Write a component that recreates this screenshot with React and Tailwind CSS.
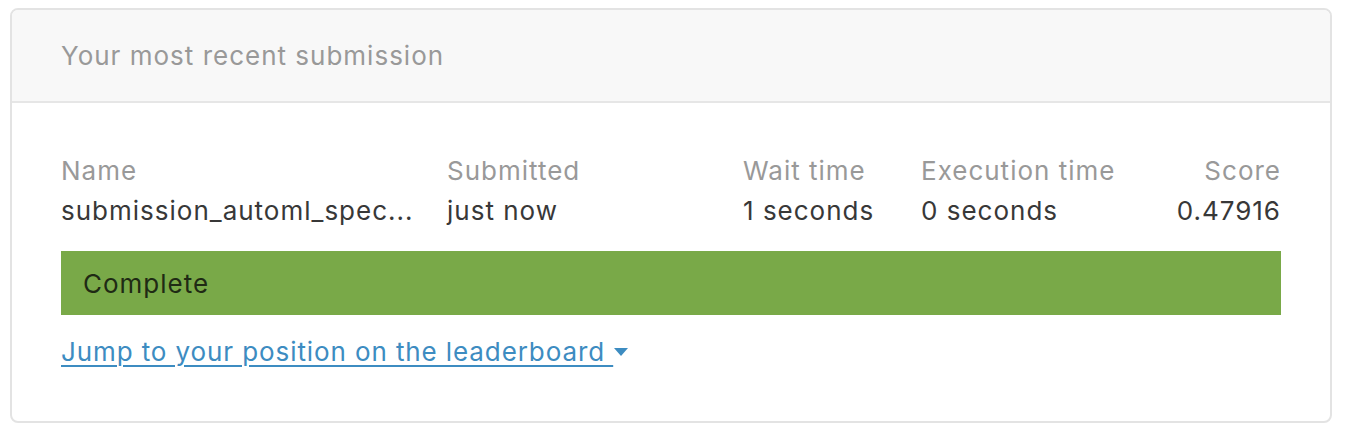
export default function App() {
  const cols = [
    { label: 'Name', value: 'submission_automl_spec...', cls: 'w-[386px]' },
    { label: 'Submitted', value: 'just now', cls: 'w-[296px]' },
    { label: 'Wait time', value: '1 seconds', cls: 'w-[178px]' },
    { label: 'Execution time', value: '0 seconds', cls: 'flex-1' },
    { label: 'Score', value: '0.47916', cls: 'text-right' },
  ]

  return (
    <div className="min-h-screen bg-white pt-2 pl-[10px] pr-[22px] font-['Inter','Liberation_Sans',sans-serif] tracking-[1px]">
      <div className="border-2 border-[#e3e3e3] rounded-lg overflow-hidden">
        {/* Header */}
        <div className="h-[93px] bg-[#f8f8f8] border-b-2 border-[#e6e6e6] flex items-center px-[49px]">
          <h2 className="text-[26px] text-[#999999]">Your most recent submission</h2>
        </div>

        {/* Body */}
        <div className="px-[49px] pt-[48px] pb-[50px]">
          <div className="flex">
            {cols.map((c, i) => (
              <div key={i} className={c.cls}>
                <div className="text-[26px] leading-[40px] text-[#999999]">{c.label}</div>
                <div className="text-[26px] leading-[40px] text-[#383838]">{c.value}</div>
              </div>
            ))}
          </div>

          <div className="mt-[20px] h-[64px] bg-[#79a948] flex items-center px-[22px]">
            <span className="text-[26px] text-[#1f2a14]">Complete</span>
          </div>

          <div className="mt-[16px] h-[40px] flex items-center">
            <a href="#" className="text-[26px] tracking-[0.9px] text-[#3d8cc1] underline underline-offset-[4px] decoration-[2px] flex items-center">
              Jump to your position on the leaderboard&nbsp;
            </a>
            <svg width="14" height="8" viewBox="0 0 14 8" className="ml-[1px] mt-[1px]">
              <path d="M0 0 L14 0 L7 8 Z" fill="#3d8cc1" />
            </svg>
          </div>
        </div>
      </div>
    </div>
  )
}
